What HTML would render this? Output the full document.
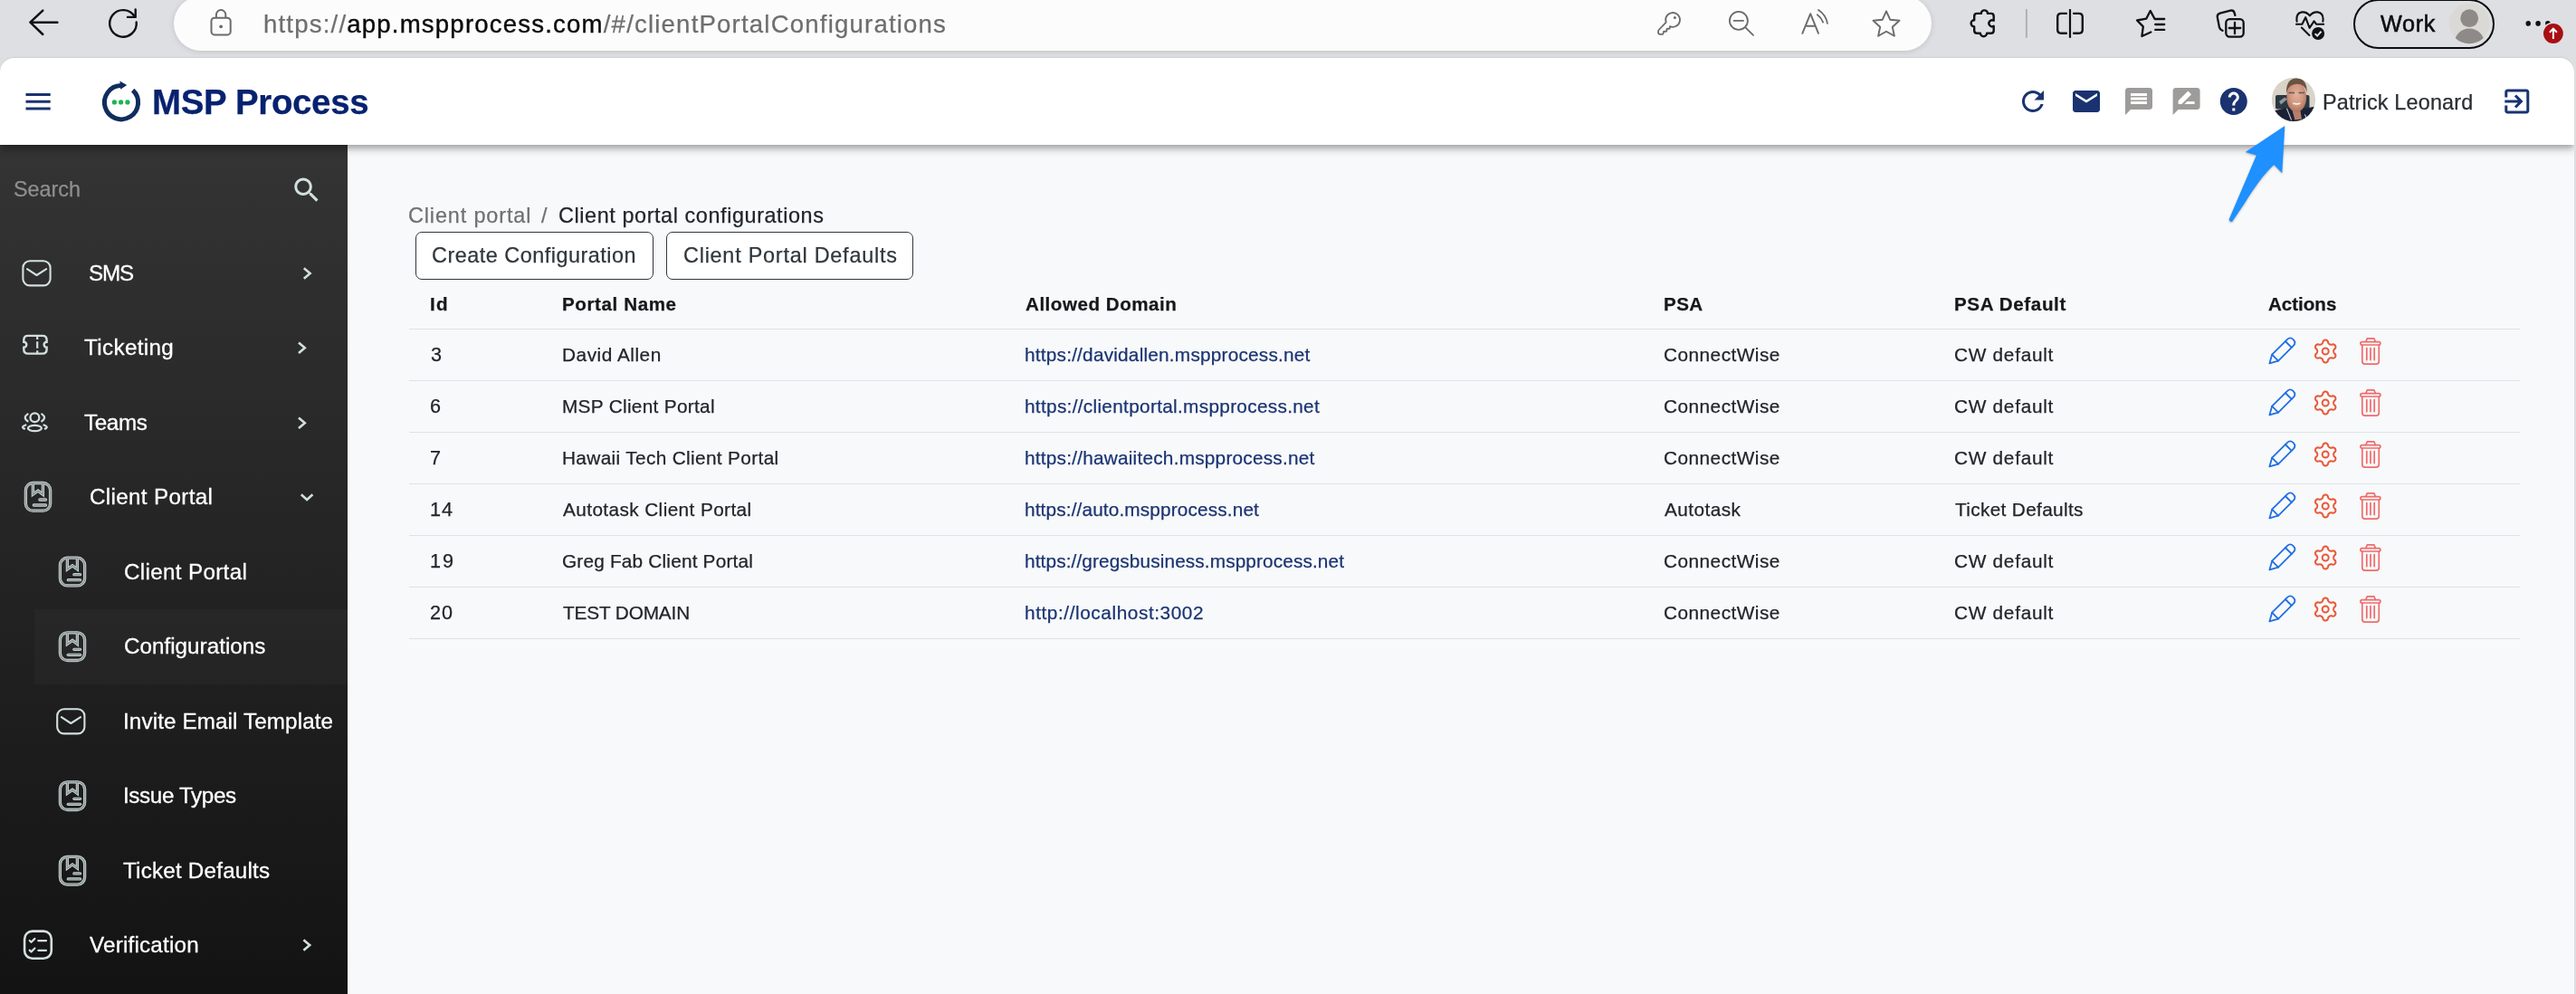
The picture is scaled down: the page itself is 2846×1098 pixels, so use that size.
<!DOCTYPE html>
<html lang="en">
<head>
<meta charset="utf-8">
<title>MSP Process - Client portal configurations</title>
<style>
*{box-sizing:border-box;margin:0;padding:0}
html,body{width:2846px;height:1098px;overflow:hidden}
body{background:#dedfe3;font-family:"Liberation Sans",sans-serif;color:#212529;position:relative}
.abs{position:absolute}
.t{position:absolute;white-space:pre;line-height:1;will-change:transform;-webkit-text-stroke:.25px}
svg{position:absolute;overflow:visible;pointer-events:none}
#urlbar{left:192px;top:-4px;width:1942px;height:60px;border-radius:30px;background:#fcfcfc;box-shadow:0 1px 6px rgba(0,0,0,.13)}
#work{left:2600px;top:-1.5px;width:156px;height:55.4px;border-radius:28px;border:2.6px solid #0c0c0c}
#page{left:0;top:64px;width:2844px;height:1040px;border-radius:16px 16px 0 0;background:#f8f9fa;overflow:hidden;box-shadow:0 -1px 1.5px rgba(0,0,20,.07)}
#side{left:0;top:96px;width:384px;height:938px;background:linear-gradient(180deg,#343434 0%,#131313 100%)}
#hdr{left:0;top:0;width:2844px;height:96px;background:#fff;box-shadow:0 3px 6px -1.5px rgba(0,0,0,.2),0 6px 7.5px 0 rgba(0,0,0,.14),0 1.5px 15px 0 rgba(0,0,0,.12)}
.sel{left:38px;top:673px;width:346px;height:83px;background:rgba(255,255,255,.022)}
.nav{color:#fff;-webkit-text-stroke:.3px}
.th{font-weight:700;color:#16181b}
.lk{color:#1b3472}
.hl{left:452px;width:2332px;height:1.5px;background:#dfe2e6}
.btn{top:256px;height:53px;border:1.6px solid #30363c;border-radius:7px;background:#fff}
</style>
</head>
<body>
<!-- browser toolbar -->
<div id="urlbar" class="abs"></div>
<div class="t" style="left:291px;top:12.6px;font-size:27.6px;letter-spacing:1.18px;color:#6e6e6e">https://<span style="color:#0b0b0b;-webkit-text-stroke:.4px">app.mspprocess.com</span>/#/clientPortalConfigurations</div>
<div id="work" class="abs"></div>
<div class="t" style="left:2629.5px;top:14.2px;font-size:25.2px;letter-spacing:0.66px;color:#0c0c0c;-webkit-text-stroke:.55px;">Work</div>
<svg width="2846" height="1098" viewBox="0 0 2846 1098" style="left:0;top:0;"><path d="M63.4 24.7 H33.6 M47.3 11.6 L33.4 24.7 L47.3 38" fill="none" stroke="#111" stroke-width="2.5" stroke-linecap="round" stroke-linejoin="round"/><path d="M150.7 24.4 A14.8 14.8 0 1 1 148.8 18.5" fill="none" stroke="#111" stroke-width="2.4" stroke-linecap="round"/><path d="M149.7 10.4 V18.9 H141" fill="none" stroke="#111" stroke-width="2.4" stroke-linecap="round" stroke-linejoin="round"/><rect x="233.5" y="19.7" width="21.2" height="18.7" rx="3.5" fill="none" stroke="#6b6b6b" stroke-width="2"/><path d="M238.9 19.5 V16.3 A5.2 5.2 0 0 1 249.3 16.3 V19.5" fill="none" stroke="#6b6b6b" stroke-width="2"/><circle cx="244.1" cy="29.3" r="1.9" fill="#6b6b6b"/><path d="M1840.7 24.7 L1832.7 33 Q1832.1 33.8 1832.1 34.8 V36 Q1832.1 37.9 1834 37.9 H1836.2 Q1837.4 37.9 1837.6 36.8 L1838 35 L1841.2 34.5 L1841.6 32 L1844.6 31.5 L1845 29.2 A7.9 7.9 0 1 0 1840.7 24.7 Z" fill="none" stroke="#6b6b6b" stroke-width="1.8" stroke-linejoin="round"/><circle cx="1850.4" cy="19.5" r="1.5" fill="#6b6b6b"/><g fill="none" stroke="#6b6b6b" stroke-width="1.8" stroke-linecap="round"><circle cx="1920.9" cy="22.9" r="10"/><path d="M1928.2 30.2 L1937 38.8 M1915.6 22.9 H1926"/></g><g fill="none" stroke="#6b6b6b" stroke-width="1.9" stroke-linecap="round" stroke-linejoin="round"><path d="M1991.3 36.8 L2000.2 15.2 L2009 36.8 M1994.8 28.8 H2005.4"/><path d="M2007.8 16.2 A17.8 17.8 0 0 1 2014.1 24.6 M2009 10.9 A22.6 22.6 0 0 1 2019 25.8" stroke-width="1.8"/></g><path d="M2084.0 12.3 L2088.2 21.7 L2098.5 22.8 L2090.8 29.7 L2092.9 39.8 L2084.0 34.7 L2075.1 39.8 L2077.2 29.7 L2069.5 22.8 L2079.8 21.7 Z" fill="none" stroke="#6b6b6b" stroke-width="1.9" stroke-linejoin="round"/><path d="M2184.2 14.9 H2188.8 A3.6 3.6 0 0 1 2196 14.9 H2199.7 Q2202.7 14.9 2202.7 17.9 V22.8 A3.5 3.5 0 1 0 2202.7 28.8 V33.7 Q2202.7 36.7 2199.7 36.7 H2195.1 A3.6 3.6 0 0 1 2187.9 36.7 H2184.2 Q2181.2 36.7 2181.2 33.7 V29.4 A3.6 3.6 0 0 1 2181.2 22.2 V17.9 Q2181.2 14.9 2184.2 14.9 Z" fill="none" stroke="#111" stroke-width="2.4" stroke-linejoin="round"/><path d="M2238.9 10.1 V41.8" stroke="#b0b1b6" stroke-width="2"/><g fill="none" stroke="#111" stroke-width="2.4" stroke-linejoin="round"><path d="M2283.8 14.9 H2277.2 Q2273.2 14.9 2273.2 18.9 V32.7 Q2273.2 36.7 2277.2 36.7 H2283.8 M2290.2 14.9 H2296.8 Q2300.8 14.9 2300.8 18.9 V32.7 Q2300.8 36.7 2296.8 36.7 H2290.2"/><path d="M2287 10.1 V41.8" stroke-width="2.2"/></g><g fill="none" stroke="#111" stroke-width="2.3" stroke-linecap="round" stroke-linejoin="round"><path d="M2376.3 35.5 L2366.4 40 L2367.8 29.4 L2361 22.5 L2371.2 20.7 L2375.7 11.9 L2380.6 21 H2391.2"/><path d="M2381.2 27 H2391.2 M2381.2 32.9 H2391.2"/></g><g fill="none" stroke="#111" stroke-width="2.3" stroke-linecap="round" stroke-linejoin="round"><path d="M2469.4 16.8 L2468.5 13.8 Q2467.5 10.9 2464.3 11.6 L2452.6 14.6 Q2449.2 15.7 2449.8 19 L2452 30.4 Q2452.8 33.1 2455.6 33.8"/><rect x="2459.3" y="21.2" width="19.4" height="19.4" rx="4"/><path d="M2469 24.8 V37.2 M2462.8 31 H2475.2"/></g><g fill="none" stroke="#111" stroke-width="2.1" stroke-linecap="round" stroke-linejoin="round"><path d="M2537.6 23.6 Q2536.4 14.4 2543.4 13.4 Q2548.4 12.9 2551.9 17.4 Q2555.4 12.9 2560.6 13.4 Q2567.6 14.4 2566.4 23.6"/><path d="M2537 26.7 H2543.4 L2547.2 19.2 L2551.6 30.8 L2556.6 23.4 L2559 26.7 H2567.2"/><path d="M2542.9 30.6 L2551.4 39"/></g><circle cx="2561.1" cy="37" r="8.2" fill="#dedfe3"/><circle cx="2561.1" cy="37" r="7" fill="#111"/><path d="M2557.6 37.1 L2560.1 39.6 L2564.6 34.7" fill="none" stroke="#dedfe3" stroke-width="2"/><circle cx="2728.2" cy="25.8" r="22.4" fill="#dbd9d5"/><clipPath id="avc"><circle cx="2728.2" cy="25.8" r="22.4"/></clipPath><g clip-path="url(#avc)" fill="#8e8a87"><circle cx="2728.2" cy="20.2" r="9.9"/><ellipse cx="2728.2" cy="47" rx="16.2" ry="15.4"/></g><circle cx="2793.3" cy="25.9" r="2.8" fill="#111"/><circle cx="2804.1" cy="25.9" r="2.8" fill="#111"/><circle cx="2814.9" cy="25.9" r="2.8" fill="#111"/><circle cx="2820.9" cy="37" r="12.6" fill="#dedfe3"/><circle cx="2820.9" cy="37" r="10.9" fill="#a80f12"/><path d="M2820.9 43 V31.8 M2816.9 35.7 L2820.9 31.6 L2824.9 35.7" fill="none" stroke="#fff" stroke-width="2"/></svg>
<!-- page -->
<div id="page" class="abs"><div id="side" class="abs"><div class="abs sel" style="top:513px"></div></div><div id="hdr" class="abs"></div></div>
<svg width="2846" height="1098" viewBox="0 0 2846 1098" style="left:0;top:0;"><path d="M28.5 104.5 H55.7 M28.5 112.3 H55.7 M28.5 120 H55.7" stroke="#1a3370" stroke-width="3"/><path d="M146.7 99.6 A18.6 18.6 0 1 1 133.4 94.6" fill="none" stroke="#0f2d5e" stroke-width="5"/><path d="M132.4 89.4 L140.2 94 L133.2 98.8 Z" fill="#0f2d5e"/><circle cx="126.4" cy="112.9" r="2.6" fill="#1db455"/><circle cx="133.6" cy="112.9" r="2.6" fill="#1db455"/><circle cx="140.9" cy="112.9" r="2.6" fill="#1db455"/><path transform="translate(2228.0 94.0) scale(1.5)" d="M17.65 6.35C16.2 4.9 14.21 4 12 4c-4.42 0-7.99 3.58-7.99 8s3.57 8 7.99 8c3.73 0 6.84-2.55 7.73-6h-2.08c-.82 2.33-3.04 4-5.65 4-3.31 0-6-2.69-6-6s2.69-6 6-6c1.66 0 3.14.69 4.22 1.78L13 11h7V4l-2.35 2.35z" fill="#1a3370"/><path transform="translate(2287.0 94.0) scale(1.5)" d="M20 4H4c-1.1 0-1.99.9-1.99 2L2 18c0 1.1.9 2 2 2h16c1.1 0 2-.9 2-2V6c0-1.1-.9-2-2-2zm0 4l-8 5-8-5V6l8 5 8-5v2z" fill="#1a3370"/><path transform="translate(2345.0 94.0) scale(1.5)" d="M20 2H4c-1.1 0-1.99.9-1.99 2L2 22l4-4h14c1.1 0 2-.9 2-2V4c0-1.1-.9-2-2-2zm-2 12H6v-2h12v2zm0-3H6V9h12v2zm0-3H6V6h12v2z" fill="#9e9b9b"/><path transform="translate(2397.6 94.0) scale(1.5)" d="M20 2H4c-1.1 0-1.99.9-1.99 2L2 22l4-4h14c1.1 0 2-.9 2-2V4c0-1.1-.9-2-2-2zM6 14v-2.47l6.88-6.88c.2-.2.51-.2.71 0l1.77 1.77c.2.2.2.51 0 .71L8.47 14H6zm12 0h-7.5l2-2H18v2z" fill="#9e9b9b"/><path transform="translate(2449.8 94.0) scale(1.5)" d="M12 2C6.48 2 2 6.48 2 12s4.48 10 10 10 10-4.48 10-10S17.52 2 12 2zm1 17h-2v-2h2v2zm2.07-7.75l-.9.92C13.45 12.9 13 13.5 13 15h-2v-.5c0-1.1.45-2.1 1.17-2.83l1.24-1.26c.37-.36.59-.86.59-1.41 0-1.1-.9-2-2-2s-2 .9-2 2H8c0-2.21 1.79-4 4-4s4 1.79 4 4c0 .88-.36 1.68-.93 2.25z" fill="#1a3370"/><path transform="translate(2762.8 94.0) scale(1.5)" d="M10.09 15.59L11.5 17l5-5-5-5-1.41 1.41L12.67 11H3v2h9.67l-2.58 2.59zM19 3H5c-1.11 0-2 .9-2 2v4h2V5h14v14H5v-4H3v4c0 1.1.89 2 2 2h14c1.1 0 2-.9 2-2V5c0-1.1-.9-2-2-2z" fill="#1a3370"/><defs><radialGradient id="skin" cx="50%" cy="42%" r="60%"><stop offset="0" stop-color="#e2b29b"/><stop offset="0.6" stop-color="#cf957c"/><stop offset="1" stop-color="#a9705a"/></radialGradient><filter id="bl" x="-20%" y="-20%" width="140%" height="140%"><feGaussianBlur stdDeviation="0.7"/></filter></defs><clipPath id="ph"><circle cx="2534" cy="109.9" r="24.1"/></clipPath><g clip-path="url(#ph)"><g filter="url(#bl)"><rect x="2506" y="82" width="56" height="56" fill="#d9d3c8"/><rect x="2514" y="105" width="37.5" height="15.5" rx="2" fill="#2b3843"/><path d="M2518 112 L2524 107.6 L2527 109.6 L2520 115.6 Z" fill="#8e979e"/><path d="M2506 138 V124 Q2514 122 2526 119 L2548 119.4 Q2556 118.6 2562 116 V138 Z" fill="#1b2335"/><path d="M2532.6 122 L2541.4 122 L2543 131.6 L2535.4 132.6 Z" fill="#b97e68"/><ellipse cx="2537.2" cy="107.4" rx="10.9" ry="16.4" fill="url(#skin)"/><path d="M2526 103 Q2525.4 86.8 2537.4 86.6 Q2549 86.8 2548.6 102 Q2546.6 92.6 2537.4 92.8 Q2528.6 92.8 2526 103 Z" fill="#6a5243"/><path d="M2528.6 102.6 H2535 M2539.6 102.6 H2546" stroke="#5d5a60" stroke-width="1.5"/><path d="M2533.4 114 Q2537.4 115.8 2541.4 114" stroke="#f6efea" stroke-width="1.9" fill="none"/><path d="M2526.4 119.6 L2531.6 132.6 M2546.4 126.4 L2548.4 131" stroke="#c9ced6" stroke-width="1.1" fill="none"/></g></g><path d="M2524.3 138.9 L2521.3 191.2 L2512.3 182 C2502 191 2490 208 2479.2 225.4 L2466.4 244.4 Q2464.6 245.8 2463 243.6 Q2462.5 242.4 2463 241.4 L2492.9 171.6 L2480.8 167.9 Z" fill="#1e90ff" style="filter:drop-shadow(0 1px 1.2px rgba(0,0,0,.28))"/></svg>
<div class="t" style="left:167.9px;top:93.7px;font-size:38.4px;letter-spacing:-0.30px;color:#07226f;font-weight:700;">MSP Process</div>
<div class="t" style="left:2566.4px;top:102.4px;font-size:23.4px;letter-spacing:0.17px;color:#2b2f33;">Patrick Leonard</div>
<svg width="2846" height="1098" viewBox="0 0 2846 1098" style="left:0;top:0;"><path transform="translate(320.8 191.9) scale(1.5)" d="M15.5 14h-.79l-.28-.27C15.41 12.59 16 11.11 16 9.5 16 5.91 13.09 3 9.5 3S3 5.91 3 9.5 5.91 16 9.5 16c1.61 0 3.09-.59 4.23-1.57l.27.28v.79l5 4.99L20.49 19l-4.99-5zm-6 0C7.01 14 5 11.99 5 9.5S7.01 5 9.5 5 14 7.01 14 9.5 11.99 14 9.5 14z" fill="#d3dfdf"/><rect x="25.4" y="288.2" width="30.2" height="27.2" rx="7.5" fill="none" stroke="#d3dfdf" stroke-width="2.1"/><path d="M30.0 297.2 L40.5 304.0 L51.2 297.2" fill="none" stroke="#d3dfdf" stroke-width="2.1" stroke-linecap="round" stroke-linejoin="round"/><path d="M335.8 296.2 L342.6 302.0 L335.8 307.8" fill="none" stroke="#d3dfdf" stroke-width="2.6" stroke-linejoin="miter"/><path d="M30.9 370.9 H47 Q51.6 370.9 51.6 375.5 V377.8 A3 3 0 0 0 51.6 383.8 V386 Q51.6 390.6 47 390.6 H30.9 Q26.3 390.6 26.3 386 V383.8 A3 3 0 0 0 26.3 377.8 V375.5 Q26.3 370.9 30.9 370.9 Z" fill="none" stroke="#d3dfdf" stroke-width="2.4"/><path d="M41.2 371.4 V375 M41.2 377.2 V384.8 M41.2 387.2 V390.2" stroke="#d3dfdf" stroke-width="2.2"/><path d="M330.0 378.4 L336.8 384.2 L330.0 390.0" fill="none" stroke="#d3dfdf" stroke-width="2.6" stroke-linejoin="miter"/><g fill="none" stroke="#d3dfdf" stroke-width="2.3" stroke-linecap="round"><circle cx="38.4" cy="461.3" r="4.9"/><ellipse cx="38.4" cy="473" rx="7.5" ry="3.2"/><path d="M30.6 457.4 Q24.8 461.4 30.6 465.2 M46.2 457.4 Q52 461.4 46.2 465.2 M28.3 469.5 Q22.6 471.4 27 473.6 M48.5 469.5 Q54.2 471.4 49.8 473.6"/></g><path d="M330.0 461.4 L336.8 467.2 L330.0 473.0" fill="none" stroke="#d3dfdf" stroke-width="2.6" stroke-linejoin="miter"/><rect x="28.4" y="533.5" width="27.2" height="30.7" rx="8" fill="none" stroke="#c9d3d3" stroke-width="3.3"/><path d="M36.4 533.5 V546.1 L42.0 542.1 L47.4 546.1 V533.5" fill="none" stroke-linejoin="miter" stroke="#c9d3d3" stroke-width="3.3"/><path d="M43.9 552.0 H50.5" fill="none" stroke-linecap="round" stroke="#c9d3d3" stroke-width="3.3"/><path d="M37.3 558.0 H50.5" fill="none" stroke-linecap="round" stroke="#c9d3d3" stroke-width="3.3"/><rect x="28.4" y="533.5" width="27.2" height="30.7" rx="8" fill="none" stroke="#8a9494" stroke-width="1.5"/><path d="M36.4 533.5 V546.1 L42.0 542.1 L47.4 546.1 V533.5" fill="none" stroke-linejoin="miter" stroke="#8a9494" stroke-width="1.5"/><path d="M43.9 552.0 H50.5" fill="none" stroke-linecap="round" stroke="#8a9494" stroke-width="1.5"/><path d="M37.3 558.0 H50.5" fill="none" stroke-linecap="round" stroke="#8a9494" stroke-width="1.5"/><path d="M332.8 546.2 L339.1 552.0 L345.4 546.2" fill="none" stroke="#d3dfdf" stroke-width="2.6" stroke-linejoin="miter"/><rect x="66.4" y="616.2" width="27.2" height="30.7" rx="8" fill="none" stroke="#c9d3d3" stroke-width="3.3"/><path d="M74.4 616.2 V628.8 L80.0 624.8 L85.4 628.8 V616.2" fill="none" stroke-linejoin="miter" stroke="#c9d3d3" stroke-width="3.3"/><path d="M81.9 634.7 H88.5" fill="none" stroke-linecap="round" stroke="#c9d3d3" stroke-width="3.3"/><path d="M75.3 640.7 H88.5" fill="none" stroke-linecap="round" stroke="#c9d3d3" stroke-width="3.3"/><rect x="66.4" y="616.2" width="27.2" height="30.7" rx="8" fill="none" stroke="#8a9494" stroke-width="1.5"/><path d="M74.4 616.2 V628.8 L80.0 624.8 L85.4 628.8 V616.2" fill="none" stroke-linejoin="miter" stroke="#8a9494" stroke-width="1.5"/><path d="M81.9 634.7 H88.5" fill="none" stroke-linecap="round" stroke="#8a9494" stroke-width="1.5"/><path d="M75.3 640.7 H88.5" fill="none" stroke-linecap="round" stroke="#8a9494" stroke-width="1.5"/><rect x="66.4" y="698.8" width="27.2" height="30.7" rx="8" fill="none" stroke="#c9d3d3" stroke-width="3.3"/><path d="M74.4 698.8 V711.4 L80.0 707.4 L85.4 711.4 V698.8" fill="none" stroke-linejoin="miter" stroke="#c9d3d3" stroke-width="3.3"/><path d="M81.9 717.3 H88.5" fill="none" stroke-linecap="round" stroke="#c9d3d3" stroke-width="3.3"/><path d="M75.3 723.3 H88.5" fill="none" stroke-linecap="round" stroke="#c9d3d3" stroke-width="3.3"/><rect x="66.4" y="698.8" width="27.2" height="30.7" rx="8" fill="none" stroke="#8a9494" stroke-width="1.5"/><path d="M74.4 698.8 V711.4 L80.0 707.4 L85.4 711.4 V698.8" fill="none" stroke-linejoin="miter" stroke="#8a9494" stroke-width="1.5"/><path d="M81.9 717.3 H88.5" fill="none" stroke-linecap="round" stroke="#8a9494" stroke-width="1.5"/><path d="M75.3 723.3 H88.5" fill="none" stroke-linecap="round" stroke="#8a9494" stroke-width="1.5"/><rect x="63.2" y="783.2" width="30.2" height="27.2" rx="7.5" fill="none" stroke="#d3dfdf" stroke-width="2.1"/><path d="M67.8 792.2 L78.3 799.0 L89.0 792.2" fill="none" stroke="#d3dfdf" stroke-width="2.1" stroke-linecap="round" stroke-linejoin="round"/><rect x="66.4" y="863.8" width="27.2" height="30.7" rx="8" fill="none" stroke="#c9d3d3" stroke-width="3.3"/><path d="M74.4 863.8 V876.4 L80.0 872.4 L85.4 876.4 V863.8" fill="none" stroke-linejoin="miter" stroke="#c9d3d3" stroke-width="3.3"/><path d="M81.9 882.3 H88.5" fill="none" stroke-linecap="round" stroke="#c9d3d3" stroke-width="3.3"/><path d="M75.3 888.3 H88.5" fill="none" stroke-linecap="round" stroke="#c9d3d3" stroke-width="3.3"/><rect x="66.4" y="863.8" width="27.2" height="30.7" rx="8" fill="none" stroke="#8a9494" stroke-width="1.5"/><path d="M74.4 863.8 V876.4 L80.0 872.4 L85.4 876.4 V863.8" fill="none" stroke-linejoin="miter" stroke="#8a9494" stroke-width="1.5"/><path d="M81.9 882.3 H88.5" fill="none" stroke-linecap="round" stroke="#8a9494" stroke-width="1.5"/><path d="M75.3 888.3 H88.5" fill="none" stroke-linecap="round" stroke="#8a9494" stroke-width="1.5"/><rect x="66.4" y="946.4" width="27.2" height="30.7" rx="8" fill="none" stroke="#c9d3d3" stroke-width="3.3"/><path d="M74.4 946.4 V959.0 L80.0 955.0 L85.4 959.0 V946.4" fill="none" stroke-linejoin="miter" stroke="#c9d3d3" stroke-width="3.3"/><path d="M81.9 964.9 H88.5" fill="none" stroke-linecap="round" stroke="#c9d3d3" stroke-width="3.3"/><path d="M75.3 970.9 H88.5" fill="none" stroke-linecap="round" stroke="#c9d3d3" stroke-width="3.3"/><rect x="66.4" y="946.4" width="27.2" height="30.7" rx="8" fill="none" stroke="#8a9494" stroke-width="1.5"/><path d="M74.4 946.4 V959.0 L80.0 955.0 L85.4 959.0 V946.4" fill="none" stroke-linejoin="miter" stroke="#8a9494" stroke-width="1.5"/><path d="M81.9 964.9 H88.5" fill="none" stroke-linecap="round" stroke="#8a9494" stroke-width="1.5"/><path d="M75.3 970.9 H88.5" fill="none" stroke-linecap="round" stroke="#8a9494" stroke-width="1.5"/><rect x="27.1" y="1028.6" width="29.7" height="30.2" rx="8.6" fill="none" stroke="#d3dfdf" stroke-width="2.6"/><path d="M32.7 1039 L34.5 1040.8 L38.4 1036.9 M42.3 1039.2 H51 M32.7 1049.6 L34.5 1051.4 L38.4 1047.5 M42.3 1049.8 H51" fill="none" stroke="#d3dfdf" stroke-width="2.2" stroke-linecap="round" stroke-linejoin="round"/><path d="M335.4 1038.2 L342.2 1044.0 L335.4 1049.8" fill="none" stroke="#d3dfdf" stroke-width="2.6" stroke-linejoin="miter"/></svg>
<div class="t" style="left:14.6px;top:197.5px;font-size:23.4px;letter-spacing:-0.04px;color:#8f8f8f;">Search</div>
<div class="t nav" style="left:98.4px;top:289.6px;font-size:24.2px;letter-spacing:-1.14px;">SMS</div>
<div class="t nav" style="left:93.1px;top:371.9px;font-size:24.2px;letter-spacing:0.36px;">Ticketing</div>
<div class="t nav" style="left:93.0px;top:454.5px;font-size:24.2px;letter-spacing:-0.34px;">Teams</div>
<div class="t nav" style="left:99.1px;top:536.8px;font-size:24.2px;letter-spacing:0.35px;">Client Portal</div>
<div class="t nav" style="left:136.7px;top:619.8px;font-size:24.2px;letter-spacing:0.34px;">Client Portal</div>
<div class="t nav" style="left:136.5px;top:702.4px;font-size:24.2px;letter-spacing:0.03px;">Configurations</div>
<div class="t nav" style="left:135.5px;top:785.1px;font-size:24.2px;letter-spacing:0.13px;">Invite Email Template</div>
<div class="t nav" style="left:135.5px;top:867.4px;font-size:24.2px;letter-spacing:-0.35px;">Issue Types</div>
<div class="t nav" style="left:136.2px;top:950.1px;font-size:24.2px;letter-spacing:0.22px;">Ticket Defaults</div>
<div class="t nav" style="left:98.9px;top:1032.1px;font-size:24.2px;letter-spacing:0.21px;">Verification</div>
<!-- content -->
<div class="t" style="left:451.3px;top:227.2px;font-size:23.4px;letter-spacing:0.88px;color:#6e7173;">Client portal</div>
<div class="t" style="left:597.9px;top:227.2px;font-size:23.4px;color:#6e7173;">/</div>
<div class="t" style="left:617.2px;top:227.2px;font-size:23.4px;letter-spacing:0.59px;color:#212529;">Client portal configurations</div>
<div class="abs btn" style="left:459.3px;width:262.5px"></div>
<div class="abs btn" style="left:736.3px;width:272.5px"></div>
<div class="t" style="left:477.4px;top:271.4px;font-size:23.4px;letter-spacing:0.51px;color:#30363c;">Create Configuration</div>
<div class="t" style="left:754.6px;top:271.4px;font-size:23.4px;letter-spacing:0.77px;color:#30363c;">Client Portal Defaults</div>
<div class="t th" style="left:475.1px;top:325.9px;font-size:20.6px;letter-spacing:1.18px;font-weight:700;">Id</div>
<div class="t th" style="left:621.4px;top:325.9px;font-size:20.6px;letter-spacing:0.59px;font-weight:700;">Portal Name</div>
<div class="t th" style="left:1133.0px;top:325.9px;font-size:20.6px;letter-spacing:0.51px;font-weight:700;">Allowed Domain</div>
<div class="t th" style="left:1838.2px;top:325.9px;font-size:20.6px;letter-spacing:0.41px;font-weight:700;">PSA</div>
<div class="t th" style="left:2159.0px;top:325.9px;font-size:20.6px;letter-spacing:0.62px;font-weight:700;">PSA Default</div>
<div class="t th" style="left:2506.0px;top:325.9px;font-size:20.6px;letter-spacing:-0.03px;font-weight:700;">Actions</div>
<div class="abs hl" style="top:362.8px"></div>
<div class="t" style="left:476.1px;top:380.8px;font-size:21.6px;">3</div>
<div class="t" style="left:621.4px;top:381.5px;font-size:20.8px;letter-spacing:0.52px;">David Allen</div>
<div class="t lk" style="left:1132.0px;top:381.5px;font-size:20.8px;letter-spacing:0.21px;">https://davidallen.mspprocess.net</div>
<div class="t" style="left:1838.2px;top:381.5px;font-size:20.8px;letter-spacing:0.47px;">ConnectWise</div>
<div class="t" style="left:2159.0px;top:381.5px;font-size:20.8px;letter-spacing:0.72px;">CW default</div>
<div class="abs hl" style="top:419.8px"></div>
<div class="t" style="left:475.1px;top:437.8px;font-size:21.6px;">6</div>
<div class="t" style="left:621.4px;top:438.5px;font-size:20.8px;letter-spacing:0.30px;">MSP Client Portal</div>
<div class="t lk" style="left:1132.0px;top:438.5px;font-size:20.8px;letter-spacing:0.30px;">https://clientportal.mspprocess.net</div>
<div class="t" style="left:1838.2px;top:438.5px;font-size:20.8px;letter-spacing:0.47px;">ConnectWise</div>
<div class="t" style="left:2159.0px;top:438.5px;font-size:20.8px;letter-spacing:0.72px;">CW default</div>
<div class="abs hl" style="top:476.8px"></div>
<div class="t" style="left:475.1px;top:494.8px;font-size:21.6px;">7</div>
<div class="t" style="left:621.4px;top:495.5px;font-size:20.8px;letter-spacing:0.35px;">Hawaii Tech Client Portal</div>
<div class="t lk" style="left:1132.0px;top:495.5px;font-size:20.8px;letter-spacing:0.22px;">https://hawaiitech.mspprocess.net</div>
<div class="t" style="left:1838.2px;top:495.5px;font-size:20.8px;letter-spacing:0.47px;">ConnectWise</div>
<div class="t" style="left:2159.0px;top:495.5px;font-size:20.8px;letter-spacing:0.72px;">CW default</div>
<div class="abs hl" style="top:533.8px"></div>
<div class="t" style="left:475.1px;top:551.8px;font-size:21.6px;letter-spacing:0.99px;">14</div>
<div class="t" style="left:622.4px;top:552.5px;font-size:20.8px;letter-spacing:0.39px;">Autotask Client Portal</div>
<div class="t lk" style="left:1132.0px;top:552.5px;font-size:20.8px;letter-spacing:0.13px;">https://auto.mspprocess.net</div>
<div class="t" style="left:1839.2px;top:552.5px;font-size:20.8px;letter-spacing:0.44px;">Autotask</div>
<div class="t" style="left:2160.0px;top:552.5px;font-size:20.8px;letter-spacing:0.33px;">Ticket Defaults</div>
<div class="abs hl" style="top:590.8px"></div>
<div class="t" style="left:475.1px;top:608.8px;font-size:21.6px;letter-spacing:1.99px;">19</div>
<div class="t" style="left:621.4px;top:609.5px;font-size:20.8px;letter-spacing:0.19px;">Greg Fab Client Portal</div>
<div class="t lk" style="left:1132.0px;top:609.5px;font-size:20.8px;letter-spacing:0.11px;">https://gregsbusiness.mspprocess.net</div>
<div class="t" style="left:1838.2px;top:609.5px;font-size:20.8px;letter-spacing:0.47px;">ConnectWise</div>
<div class="t" style="left:2159.0px;top:609.5px;font-size:20.8px;letter-spacing:0.72px;">CW default</div>
<div class="abs hl" style="top:647.8px"></div>
<div class="t" style="left:475.1px;top:665.8px;font-size:21.6px;letter-spacing:0.99px;">20</div>
<div class="t" style="left:622.4px;top:666.5px;font-size:20.8px;letter-spacing:-0.15px;">TEST DOMAIN</div>
<div class="t lk" style="left:1132.0px;top:666.5px;font-size:20.8px;letter-spacing:0.57px;">http://localhost:3002</div>
<div class="t" style="left:1838.2px;top:666.5px;font-size:20.8px;letter-spacing:0.47px;">ConnectWise</div>
<div class="t" style="left:2159.0px;top:666.5px;font-size:20.8px;letter-spacing:0.72px;">CW default</div>
<div class="abs hl" style="top:704.8px"></div>
<svg width="2846" height="1098" viewBox="0 0 2846 1098" style="left:0;top:0;"><g transform="translate(2507.4 401.4) rotate(-45)" fill="none" stroke="#1f6fe5" stroke-width="1.8" stroke-linejoin="round" stroke-linecap="round"><path d="M0 0 L8.8 -4.9 L32.4 -4.9 Q37.2 -4.9 37.2 0 Q37.2 4.9 32.4 4.9 L8.8 4.9 Z"/><path d="M8.8 -4.9 V4.9 M29.6 -4.9 V4.9"/></g><path d="M2578.15 388.00 L2578.18 387.61 L2578.26 387.21 L2578.40 386.79 L2578.60 386.34 L2578.89 385.85 L2579.54 385.23 L2580.15 384.55 L2580.34 383.95 L2580.40 383.36 L2580.35 382.80 L2580.21 382.27 L2579.98 381.77 L2579.67 381.33 L2579.28 380.94 L2578.82 380.62 L2578.28 380.38 L2577.66 380.25 L2576.77 380.43 L2575.90 380.68 L2575.34 380.69 L2574.85 380.64 L2574.42 380.55 L2574.03 380.42 L2573.67 380.25 L2573.35 380.03 L2573.04 379.76 L2572.75 379.43 L2572.46 379.03 L2572.18 378.54 L2571.97 377.66 L2571.68 376.79 L2571.26 376.33 L2570.78 375.98 L2570.27 375.74 L2569.74 375.60 L2569.20 375.55 L2568.66 375.60 L2568.13 375.74 L2567.62 375.98 L2567.14 376.33 L2566.72 376.79 L2566.43 377.66 L2566.22 378.54 L2565.94 379.03 L2565.65 379.43 L2565.36 379.76 L2565.05 380.03 L2564.72 380.25 L2564.37 380.42 L2563.98 380.55 L2563.55 380.64 L2563.06 380.69 L2562.50 380.68 L2561.63 380.43 L2560.74 380.25 L2560.12 380.38 L2559.58 380.62 L2559.12 380.94 L2558.73 381.33 L2558.42 381.77 L2558.19 382.27 L2558.05 382.80 L2558.00 383.36 L2558.06 383.95 L2558.25 384.55 L2558.86 385.23 L2559.51 385.85 L2559.80 386.34 L2560.00 386.79 L2560.14 387.21 L2560.22 387.61 L2560.25 388.00 L2560.22 388.39 L2560.14 388.79 L2560.00 389.21 L2559.80 389.66 L2559.51 390.15 L2558.86 390.77 L2558.25 391.45 L2558.06 392.05 L2558.00 392.64 L2558.05 393.20 L2558.19 393.73 L2558.42 394.23 L2558.73 394.67 L2559.12 395.06 L2559.58 395.38 L2560.12 395.62 L2560.74 395.75 L2561.63 395.57 L2562.50 395.32 L2563.06 395.31 L2563.55 395.36 L2563.98 395.45 L2564.37 395.58 L2564.72 395.75 L2565.05 395.97 L2565.36 396.24 L2565.65 396.57 L2565.94 396.97 L2566.22 397.46 L2566.43 398.34 L2566.72 399.21 L2567.14 399.67 L2567.62 400.02 L2568.13 400.26 L2568.66 400.40 L2569.20 400.45 L2569.74 400.40 L2570.27 400.26 L2570.78 400.02 L2571.26 399.67 L2571.68 399.21 L2571.97 398.34 L2572.18 397.46 L2572.46 396.97 L2572.75 396.57 L2573.04 396.24 L2573.35 395.97 L2573.67 395.75 L2574.03 395.58 L2574.42 395.45 L2574.85 395.36 L2575.34 395.31 L2575.90 395.32 L2576.77 395.57 L2577.66 395.75 L2578.28 395.62 L2578.82 395.38 L2579.28 395.06 L2579.67 394.67 L2579.98 394.23 L2580.21 393.73 L2580.35 393.20 L2580.40 392.64 L2580.34 392.05 L2580.15 391.45 L2579.54 390.77 L2578.89 390.15 L2578.60 389.66 L2578.40 389.21 L2578.26 388.79 L2578.18 388.39 Z" fill="none" stroke="#e8593a" stroke-width="2.05" stroke-linejoin="round"/><circle cx="2569.2" cy="388.0" r="3.5" fill="none" stroke="#e8593a" stroke-width="2"/><g fill="none" stroke="#f06b6b" stroke-width="1.7" stroke-linejoin="round" stroke-linecap="round"><rect x="2607.9" y="377.6" width="22" height="3.4" rx="1.7"/><path d="M2613.9 377.4 L2615.3 373.8 H2622.9 L2624.3 377.4"/><path d="M2609.8 381.2 V399.0 Q2609.8 402.1 2613 402.1 H2625.1 Q2628.3 402.1 2628.3 399.0 V381.2"/><path d="M2614.8 384.6 V397.6 M2619 384.6 V397.6 M2623.2 384.6 V397.6"/></g><g transform="translate(2507.4 458.4) rotate(-45)" fill="none" stroke="#1f6fe5" stroke-width="1.8" stroke-linejoin="round" stroke-linecap="round"><path d="M0 0 L8.8 -4.9 L32.4 -4.9 Q37.2 -4.9 37.2 0 Q37.2 4.9 32.4 4.9 L8.8 4.9 Z"/><path d="M8.8 -4.9 V4.9 M29.6 -4.9 V4.9"/></g><path d="M2578.15 445.00 L2578.18 444.61 L2578.26 444.21 L2578.40 443.79 L2578.60 443.34 L2578.89 442.85 L2579.54 442.23 L2580.15 441.55 L2580.34 440.95 L2580.40 440.36 L2580.35 439.80 L2580.21 439.27 L2579.98 438.77 L2579.67 438.33 L2579.28 437.94 L2578.82 437.62 L2578.28 437.38 L2577.66 437.25 L2576.77 437.43 L2575.90 437.68 L2575.34 437.69 L2574.85 437.64 L2574.42 437.55 L2574.03 437.42 L2573.67 437.25 L2573.35 437.03 L2573.04 436.76 L2572.75 436.43 L2572.46 436.03 L2572.18 435.54 L2571.97 434.66 L2571.68 433.79 L2571.26 433.33 L2570.78 432.98 L2570.27 432.74 L2569.74 432.60 L2569.20 432.55 L2568.66 432.60 L2568.13 432.74 L2567.62 432.98 L2567.14 433.33 L2566.72 433.79 L2566.43 434.66 L2566.22 435.54 L2565.94 436.03 L2565.65 436.43 L2565.36 436.76 L2565.05 437.03 L2564.72 437.25 L2564.37 437.42 L2563.98 437.55 L2563.55 437.64 L2563.06 437.69 L2562.50 437.68 L2561.63 437.43 L2560.74 437.25 L2560.12 437.38 L2559.58 437.62 L2559.12 437.94 L2558.73 438.33 L2558.42 438.77 L2558.19 439.27 L2558.05 439.80 L2558.00 440.36 L2558.06 440.95 L2558.25 441.55 L2558.86 442.23 L2559.51 442.85 L2559.80 443.34 L2560.00 443.79 L2560.14 444.21 L2560.22 444.61 L2560.25 445.00 L2560.22 445.39 L2560.14 445.79 L2560.00 446.21 L2559.80 446.66 L2559.51 447.15 L2558.86 447.77 L2558.25 448.45 L2558.06 449.05 L2558.00 449.64 L2558.05 450.20 L2558.19 450.73 L2558.42 451.23 L2558.73 451.67 L2559.12 452.06 L2559.58 452.38 L2560.12 452.62 L2560.74 452.75 L2561.63 452.57 L2562.50 452.32 L2563.06 452.31 L2563.55 452.36 L2563.98 452.45 L2564.37 452.58 L2564.72 452.75 L2565.05 452.97 L2565.36 453.24 L2565.65 453.57 L2565.94 453.97 L2566.22 454.46 L2566.43 455.34 L2566.72 456.21 L2567.14 456.67 L2567.62 457.02 L2568.13 457.26 L2568.66 457.40 L2569.20 457.45 L2569.74 457.40 L2570.27 457.26 L2570.78 457.02 L2571.26 456.67 L2571.68 456.21 L2571.97 455.34 L2572.18 454.46 L2572.46 453.97 L2572.75 453.57 L2573.04 453.24 L2573.35 452.97 L2573.67 452.75 L2574.03 452.58 L2574.42 452.45 L2574.85 452.36 L2575.34 452.31 L2575.90 452.32 L2576.77 452.57 L2577.66 452.75 L2578.28 452.62 L2578.82 452.38 L2579.28 452.06 L2579.67 451.67 L2579.98 451.23 L2580.21 450.73 L2580.35 450.20 L2580.40 449.64 L2580.34 449.05 L2580.15 448.45 L2579.54 447.77 L2578.89 447.15 L2578.60 446.66 L2578.40 446.21 L2578.26 445.79 L2578.18 445.39 Z" fill="none" stroke="#e8593a" stroke-width="2.05" stroke-linejoin="round"/><circle cx="2569.2" cy="445.0" r="3.5" fill="none" stroke="#e8593a" stroke-width="2"/><g fill="none" stroke="#f06b6b" stroke-width="1.7" stroke-linejoin="round" stroke-linecap="round"><rect x="2607.9" y="434.6" width="22" height="3.4" rx="1.7"/><path d="M2613.9 434.4 L2615.3 430.8 H2622.9 L2624.3 434.4"/><path d="M2609.8 438.2 V456.0 Q2609.8 459.1 2613 459.1 H2625.1 Q2628.3 459.1 2628.3 456.0 V438.2"/><path d="M2614.8 441.6 V454.6 M2619 441.6 V454.6 M2623.2 441.6 V454.6"/></g><g transform="translate(2507.4 515.4) rotate(-45)" fill="none" stroke="#1f6fe5" stroke-width="1.8" stroke-linejoin="round" stroke-linecap="round"><path d="M0 0 L8.8 -4.9 L32.4 -4.9 Q37.2 -4.9 37.2 0 Q37.2 4.9 32.4 4.9 L8.8 4.9 Z"/><path d="M8.8 -4.9 V4.9 M29.6 -4.9 V4.9"/></g><path d="M2578.15 502.00 L2578.18 501.61 L2578.26 501.21 L2578.40 500.79 L2578.60 500.34 L2578.89 499.85 L2579.54 499.23 L2580.15 498.55 L2580.34 497.95 L2580.40 497.36 L2580.35 496.80 L2580.21 496.27 L2579.98 495.77 L2579.67 495.33 L2579.28 494.94 L2578.82 494.62 L2578.28 494.38 L2577.66 494.25 L2576.77 494.43 L2575.90 494.68 L2575.34 494.69 L2574.85 494.64 L2574.42 494.55 L2574.03 494.42 L2573.67 494.25 L2573.35 494.03 L2573.04 493.76 L2572.75 493.43 L2572.46 493.03 L2572.18 492.54 L2571.97 491.66 L2571.68 490.79 L2571.26 490.33 L2570.78 489.98 L2570.27 489.74 L2569.74 489.60 L2569.20 489.55 L2568.66 489.60 L2568.13 489.74 L2567.62 489.98 L2567.14 490.33 L2566.72 490.79 L2566.43 491.66 L2566.22 492.54 L2565.94 493.03 L2565.65 493.43 L2565.36 493.76 L2565.05 494.03 L2564.72 494.25 L2564.37 494.42 L2563.98 494.55 L2563.55 494.64 L2563.06 494.69 L2562.50 494.68 L2561.63 494.43 L2560.74 494.25 L2560.12 494.38 L2559.58 494.62 L2559.12 494.94 L2558.73 495.33 L2558.42 495.77 L2558.19 496.27 L2558.05 496.80 L2558.00 497.36 L2558.06 497.95 L2558.25 498.55 L2558.86 499.23 L2559.51 499.85 L2559.80 500.34 L2560.00 500.79 L2560.14 501.21 L2560.22 501.61 L2560.25 502.00 L2560.22 502.39 L2560.14 502.79 L2560.00 503.21 L2559.80 503.66 L2559.51 504.15 L2558.86 504.77 L2558.25 505.45 L2558.06 506.05 L2558.00 506.64 L2558.05 507.20 L2558.19 507.73 L2558.42 508.23 L2558.73 508.67 L2559.12 509.06 L2559.58 509.38 L2560.12 509.62 L2560.74 509.75 L2561.63 509.57 L2562.50 509.32 L2563.06 509.31 L2563.55 509.36 L2563.98 509.45 L2564.37 509.58 L2564.72 509.75 L2565.05 509.97 L2565.36 510.24 L2565.65 510.57 L2565.94 510.97 L2566.22 511.46 L2566.43 512.34 L2566.72 513.21 L2567.14 513.67 L2567.62 514.02 L2568.13 514.26 L2568.66 514.40 L2569.20 514.45 L2569.74 514.40 L2570.27 514.26 L2570.78 514.02 L2571.26 513.67 L2571.68 513.21 L2571.97 512.34 L2572.18 511.46 L2572.46 510.97 L2572.75 510.57 L2573.04 510.24 L2573.35 509.97 L2573.67 509.75 L2574.03 509.58 L2574.42 509.45 L2574.85 509.36 L2575.34 509.31 L2575.90 509.32 L2576.77 509.57 L2577.66 509.75 L2578.28 509.62 L2578.82 509.38 L2579.28 509.06 L2579.67 508.67 L2579.98 508.23 L2580.21 507.73 L2580.35 507.20 L2580.40 506.64 L2580.34 506.05 L2580.15 505.45 L2579.54 504.77 L2578.89 504.15 L2578.60 503.66 L2578.40 503.21 L2578.26 502.79 L2578.18 502.39 Z" fill="none" stroke="#e8593a" stroke-width="2.05" stroke-linejoin="round"/><circle cx="2569.2" cy="502.0" r="3.5" fill="none" stroke="#e8593a" stroke-width="2"/><g fill="none" stroke="#f06b6b" stroke-width="1.7" stroke-linejoin="round" stroke-linecap="round"><rect x="2607.9" y="491.6" width="22" height="3.4" rx="1.7"/><path d="M2613.9 491.4 L2615.3 487.8 H2622.9 L2624.3 491.4"/><path d="M2609.8 495.2 V513.0 Q2609.8 516.1 2613 516.1 H2625.1 Q2628.3 516.1 2628.3 513.0 V495.2"/><path d="M2614.8 498.6 V511.6 M2619 498.6 V511.6 M2623.2 498.6 V511.6"/></g><g transform="translate(2507.4 572.4) rotate(-45)" fill="none" stroke="#1f6fe5" stroke-width="1.8" stroke-linejoin="round" stroke-linecap="round"><path d="M0 0 L8.8 -4.9 L32.4 -4.9 Q37.2 -4.9 37.2 0 Q37.2 4.9 32.4 4.9 L8.8 4.9 Z"/><path d="M8.8 -4.9 V4.9 M29.6 -4.9 V4.9"/></g><path d="M2578.15 559.00 L2578.18 558.61 L2578.26 558.21 L2578.40 557.79 L2578.60 557.34 L2578.89 556.85 L2579.54 556.23 L2580.15 555.55 L2580.34 554.95 L2580.40 554.36 L2580.35 553.80 L2580.21 553.27 L2579.98 552.77 L2579.67 552.33 L2579.28 551.94 L2578.82 551.62 L2578.28 551.38 L2577.66 551.25 L2576.77 551.43 L2575.90 551.68 L2575.34 551.69 L2574.85 551.64 L2574.42 551.55 L2574.03 551.42 L2573.67 551.25 L2573.35 551.03 L2573.04 550.76 L2572.75 550.43 L2572.46 550.03 L2572.18 549.54 L2571.97 548.66 L2571.68 547.79 L2571.26 547.33 L2570.78 546.98 L2570.27 546.74 L2569.74 546.60 L2569.20 546.55 L2568.66 546.60 L2568.13 546.74 L2567.62 546.98 L2567.14 547.33 L2566.72 547.79 L2566.43 548.66 L2566.22 549.54 L2565.94 550.03 L2565.65 550.43 L2565.36 550.76 L2565.05 551.03 L2564.72 551.25 L2564.37 551.42 L2563.98 551.55 L2563.55 551.64 L2563.06 551.69 L2562.50 551.68 L2561.63 551.43 L2560.74 551.25 L2560.12 551.38 L2559.58 551.62 L2559.12 551.94 L2558.73 552.33 L2558.42 552.77 L2558.19 553.27 L2558.05 553.80 L2558.00 554.36 L2558.06 554.95 L2558.25 555.55 L2558.86 556.23 L2559.51 556.85 L2559.80 557.34 L2560.00 557.79 L2560.14 558.21 L2560.22 558.61 L2560.25 559.00 L2560.22 559.39 L2560.14 559.79 L2560.00 560.21 L2559.80 560.66 L2559.51 561.15 L2558.86 561.77 L2558.25 562.45 L2558.06 563.05 L2558.00 563.64 L2558.05 564.20 L2558.19 564.73 L2558.42 565.23 L2558.73 565.67 L2559.12 566.06 L2559.58 566.38 L2560.12 566.62 L2560.74 566.75 L2561.63 566.57 L2562.50 566.32 L2563.06 566.31 L2563.55 566.36 L2563.98 566.45 L2564.37 566.58 L2564.72 566.75 L2565.05 566.97 L2565.36 567.24 L2565.65 567.57 L2565.94 567.97 L2566.22 568.46 L2566.43 569.34 L2566.72 570.21 L2567.14 570.67 L2567.62 571.02 L2568.13 571.26 L2568.66 571.40 L2569.20 571.45 L2569.74 571.40 L2570.27 571.26 L2570.78 571.02 L2571.26 570.67 L2571.68 570.21 L2571.97 569.34 L2572.18 568.46 L2572.46 567.97 L2572.75 567.57 L2573.04 567.24 L2573.35 566.97 L2573.67 566.75 L2574.03 566.58 L2574.42 566.45 L2574.85 566.36 L2575.34 566.31 L2575.90 566.32 L2576.77 566.57 L2577.66 566.75 L2578.28 566.62 L2578.82 566.38 L2579.28 566.06 L2579.67 565.67 L2579.98 565.23 L2580.21 564.73 L2580.35 564.20 L2580.40 563.64 L2580.34 563.05 L2580.15 562.45 L2579.54 561.77 L2578.89 561.15 L2578.60 560.66 L2578.40 560.21 L2578.26 559.79 L2578.18 559.39 Z" fill="none" stroke="#e8593a" stroke-width="2.05" stroke-linejoin="round"/><circle cx="2569.2" cy="559.0" r="3.5" fill="none" stroke="#e8593a" stroke-width="2"/><g fill="none" stroke="#f06b6b" stroke-width="1.7" stroke-linejoin="round" stroke-linecap="round"><rect x="2607.9" y="548.6" width="22" height="3.4" rx="1.7"/><path d="M2613.9 548.4 L2615.3 544.8 H2622.9 L2624.3 548.4"/><path d="M2609.8 552.2 V570.0 Q2609.8 573.1 2613 573.1 H2625.1 Q2628.3 573.1 2628.3 570.0 V552.2"/><path d="M2614.8 555.6 V568.6 M2619 555.6 V568.6 M2623.2 555.6 V568.6"/></g><g transform="translate(2507.4 629.4) rotate(-45)" fill="none" stroke="#1f6fe5" stroke-width="1.8" stroke-linejoin="round" stroke-linecap="round"><path d="M0 0 L8.8 -4.9 L32.4 -4.9 Q37.2 -4.9 37.2 0 Q37.2 4.9 32.4 4.9 L8.8 4.9 Z"/><path d="M8.8 -4.9 V4.9 M29.6 -4.9 V4.9"/></g><path d="M2578.15 616.00 L2578.18 615.61 L2578.26 615.21 L2578.40 614.79 L2578.60 614.34 L2578.89 613.85 L2579.54 613.23 L2580.15 612.55 L2580.34 611.95 L2580.40 611.36 L2580.35 610.80 L2580.21 610.27 L2579.98 609.77 L2579.67 609.33 L2579.28 608.94 L2578.82 608.62 L2578.28 608.38 L2577.66 608.25 L2576.77 608.43 L2575.90 608.68 L2575.34 608.69 L2574.85 608.64 L2574.42 608.55 L2574.03 608.42 L2573.67 608.25 L2573.35 608.03 L2573.04 607.76 L2572.75 607.43 L2572.46 607.03 L2572.18 606.54 L2571.97 605.66 L2571.68 604.79 L2571.26 604.33 L2570.78 603.98 L2570.27 603.74 L2569.74 603.60 L2569.20 603.55 L2568.66 603.60 L2568.13 603.74 L2567.62 603.98 L2567.14 604.33 L2566.72 604.79 L2566.43 605.66 L2566.22 606.54 L2565.94 607.03 L2565.65 607.43 L2565.36 607.76 L2565.05 608.03 L2564.72 608.25 L2564.37 608.42 L2563.98 608.55 L2563.55 608.64 L2563.06 608.69 L2562.50 608.68 L2561.63 608.43 L2560.74 608.25 L2560.12 608.38 L2559.58 608.62 L2559.12 608.94 L2558.73 609.33 L2558.42 609.77 L2558.19 610.27 L2558.05 610.80 L2558.00 611.36 L2558.06 611.95 L2558.25 612.55 L2558.86 613.23 L2559.51 613.85 L2559.80 614.34 L2560.00 614.79 L2560.14 615.21 L2560.22 615.61 L2560.25 616.00 L2560.22 616.39 L2560.14 616.79 L2560.00 617.21 L2559.80 617.66 L2559.51 618.15 L2558.86 618.77 L2558.25 619.45 L2558.06 620.05 L2558.00 620.64 L2558.05 621.20 L2558.19 621.73 L2558.42 622.23 L2558.73 622.67 L2559.12 623.06 L2559.58 623.38 L2560.12 623.62 L2560.74 623.75 L2561.63 623.57 L2562.50 623.32 L2563.06 623.31 L2563.55 623.36 L2563.98 623.45 L2564.37 623.58 L2564.72 623.75 L2565.05 623.97 L2565.36 624.24 L2565.65 624.57 L2565.94 624.97 L2566.22 625.46 L2566.43 626.34 L2566.72 627.21 L2567.14 627.67 L2567.62 628.02 L2568.13 628.26 L2568.66 628.40 L2569.20 628.45 L2569.74 628.40 L2570.27 628.26 L2570.78 628.02 L2571.26 627.67 L2571.68 627.21 L2571.97 626.34 L2572.18 625.46 L2572.46 624.97 L2572.75 624.57 L2573.04 624.24 L2573.35 623.97 L2573.67 623.75 L2574.03 623.58 L2574.42 623.45 L2574.85 623.36 L2575.34 623.31 L2575.90 623.32 L2576.77 623.57 L2577.66 623.75 L2578.28 623.62 L2578.82 623.38 L2579.28 623.06 L2579.67 622.67 L2579.98 622.23 L2580.21 621.73 L2580.35 621.20 L2580.40 620.64 L2580.34 620.05 L2580.15 619.45 L2579.54 618.77 L2578.89 618.15 L2578.60 617.66 L2578.40 617.21 L2578.26 616.79 L2578.18 616.39 Z" fill="none" stroke="#e8593a" stroke-width="2.05" stroke-linejoin="round"/><circle cx="2569.2" cy="616.0" r="3.5" fill="none" stroke="#e8593a" stroke-width="2"/><g fill="none" stroke="#f06b6b" stroke-width="1.7" stroke-linejoin="round" stroke-linecap="round"><rect x="2607.9" y="605.6" width="22" height="3.4" rx="1.7"/><path d="M2613.9 605.4 L2615.3 601.8 H2622.9 L2624.3 605.4"/><path d="M2609.8 609.2 V627.0 Q2609.8 630.1 2613 630.1 H2625.1 Q2628.3 630.1 2628.3 627.0 V609.2"/><path d="M2614.8 612.6 V625.6 M2619 612.6 V625.6 M2623.2 612.6 V625.6"/></g><g transform="translate(2507.4 686.4) rotate(-45)" fill="none" stroke="#1f6fe5" stroke-width="1.8" stroke-linejoin="round" stroke-linecap="round"><path d="M0 0 L8.8 -4.9 L32.4 -4.9 Q37.2 -4.9 37.2 0 Q37.2 4.9 32.4 4.9 L8.8 4.9 Z"/><path d="M8.8 -4.9 V4.9 M29.6 -4.9 V4.9"/></g><path d="M2578.15 673.00 L2578.18 672.61 L2578.26 672.21 L2578.40 671.79 L2578.60 671.34 L2578.89 670.85 L2579.54 670.23 L2580.15 669.55 L2580.34 668.95 L2580.40 668.36 L2580.35 667.80 L2580.21 667.27 L2579.98 666.77 L2579.67 666.33 L2579.28 665.94 L2578.82 665.62 L2578.28 665.38 L2577.66 665.25 L2576.77 665.43 L2575.90 665.68 L2575.34 665.69 L2574.85 665.64 L2574.42 665.55 L2574.03 665.42 L2573.67 665.25 L2573.35 665.03 L2573.04 664.76 L2572.75 664.43 L2572.46 664.03 L2572.18 663.54 L2571.97 662.66 L2571.68 661.79 L2571.26 661.33 L2570.78 660.98 L2570.27 660.74 L2569.74 660.60 L2569.20 660.55 L2568.66 660.60 L2568.13 660.74 L2567.62 660.98 L2567.14 661.33 L2566.72 661.79 L2566.43 662.66 L2566.22 663.54 L2565.94 664.03 L2565.65 664.43 L2565.36 664.76 L2565.05 665.03 L2564.72 665.25 L2564.37 665.42 L2563.98 665.55 L2563.55 665.64 L2563.06 665.69 L2562.50 665.68 L2561.63 665.43 L2560.74 665.25 L2560.12 665.38 L2559.58 665.62 L2559.12 665.94 L2558.73 666.33 L2558.42 666.77 L2558.19 667.27 L2558.05 667.80 L2558.00 668.36 L2558.06 668.95 L2558.25 669.55 L2558.86 670.23 L2559.51 670.85 L2559.80 671.34 L2560.00 671.79 L2560.14 672.21 L2560.22 672.61 L2560.25 673.00 L2560.22 673.39 L2560.14 673.79 L2560.00 674.21 L2559.80 674.66 L2559.51 675.15 L2558.86 675.77 L2558.25 676.45 L2558.06 677.05 L2558.00 677.64 L2558.05 678.20 L2558.19 678.73 L2558.42 679.23 L2558.73 679.67 L2559.12 680.06 L2559.58 680.38 L2560.12 680.62 L2560.74 680.75 L2561.63 680.57 L2562.50 680.32 L2563.06 680.31 L2563.55 680.36 L2563.98 680.45 L2564.37 680.58 L2564.72 680.75 L2565.05 680.97 L2565.36 681.24 L2565.65 681.57 L2565.94 681.97 L2566.22 682.46 L2566.43 683.34 L2566.72 684.21 L2567.14 684.67 L2567.62 685.02 L2568.13 685.26 L2568.66 685.40 L2569.20 685.45 L2569.74 685.40 L2570.27 685.26 L2570.78 685.02 L2571.26 684.67 L2571.68 684.21 L2571.97 683.34 L2572.18 682.46 L2572.46 681.97 L2572.75 681.57 L2573.04 681.24 L2573.35 680.97 L2573.67 680.75 L2574.03 680.58 L2574.42 680.45 L2574.85 680.36 L2575.34 680.31 L2575.90 680.32 L2576.77 680.57 L2577.66 680.75 L2578.28 680.62 L2578.82 680.38 L2579.28 680.06 L2579.67 679.67 L2579.98 679.23 L2580.21 678.73 L2580.35 678.20 L2580.40 677.64 L2580.34 677.05 L2580.15 676.45 L2579.54 675.77 L2578.89 675.15 L2578.60 674.66 L2578.40 674.21 L2578.26 673.79 L2578.18 673.39 Z" fill="none" stroke="#e8593a" stroke-width="2.05" stroke-linejoin="round"/><circle cx="2569.2" cy="673.0" r="3.5" fill="none" stroke="#e8593a" stroke-width="2"/><g fill="none" stroke="#f06b6b" stroke-width="1.7" stroke-linejoin="round" stroke-linecap="round"><rect x="2607.9" y="662.6" width="22" height="3.4" rx="1.7"/><path d="M2613.9 662.4 L2615.3 658.8 H2622.9 L2624.3 662.4"/><path d="M2609.8 666.2 V684.0 Q2609.8 687.1 2613 687.1 H2625.1 Q2628.3 687.1 2628.3 684.0 V666.2"/><path d="M2614.8 669.6 V682.6 M2619 669.6 V682.6 M2623.2 669.6 V682.6"/></g></svg>
</body>
</html>
